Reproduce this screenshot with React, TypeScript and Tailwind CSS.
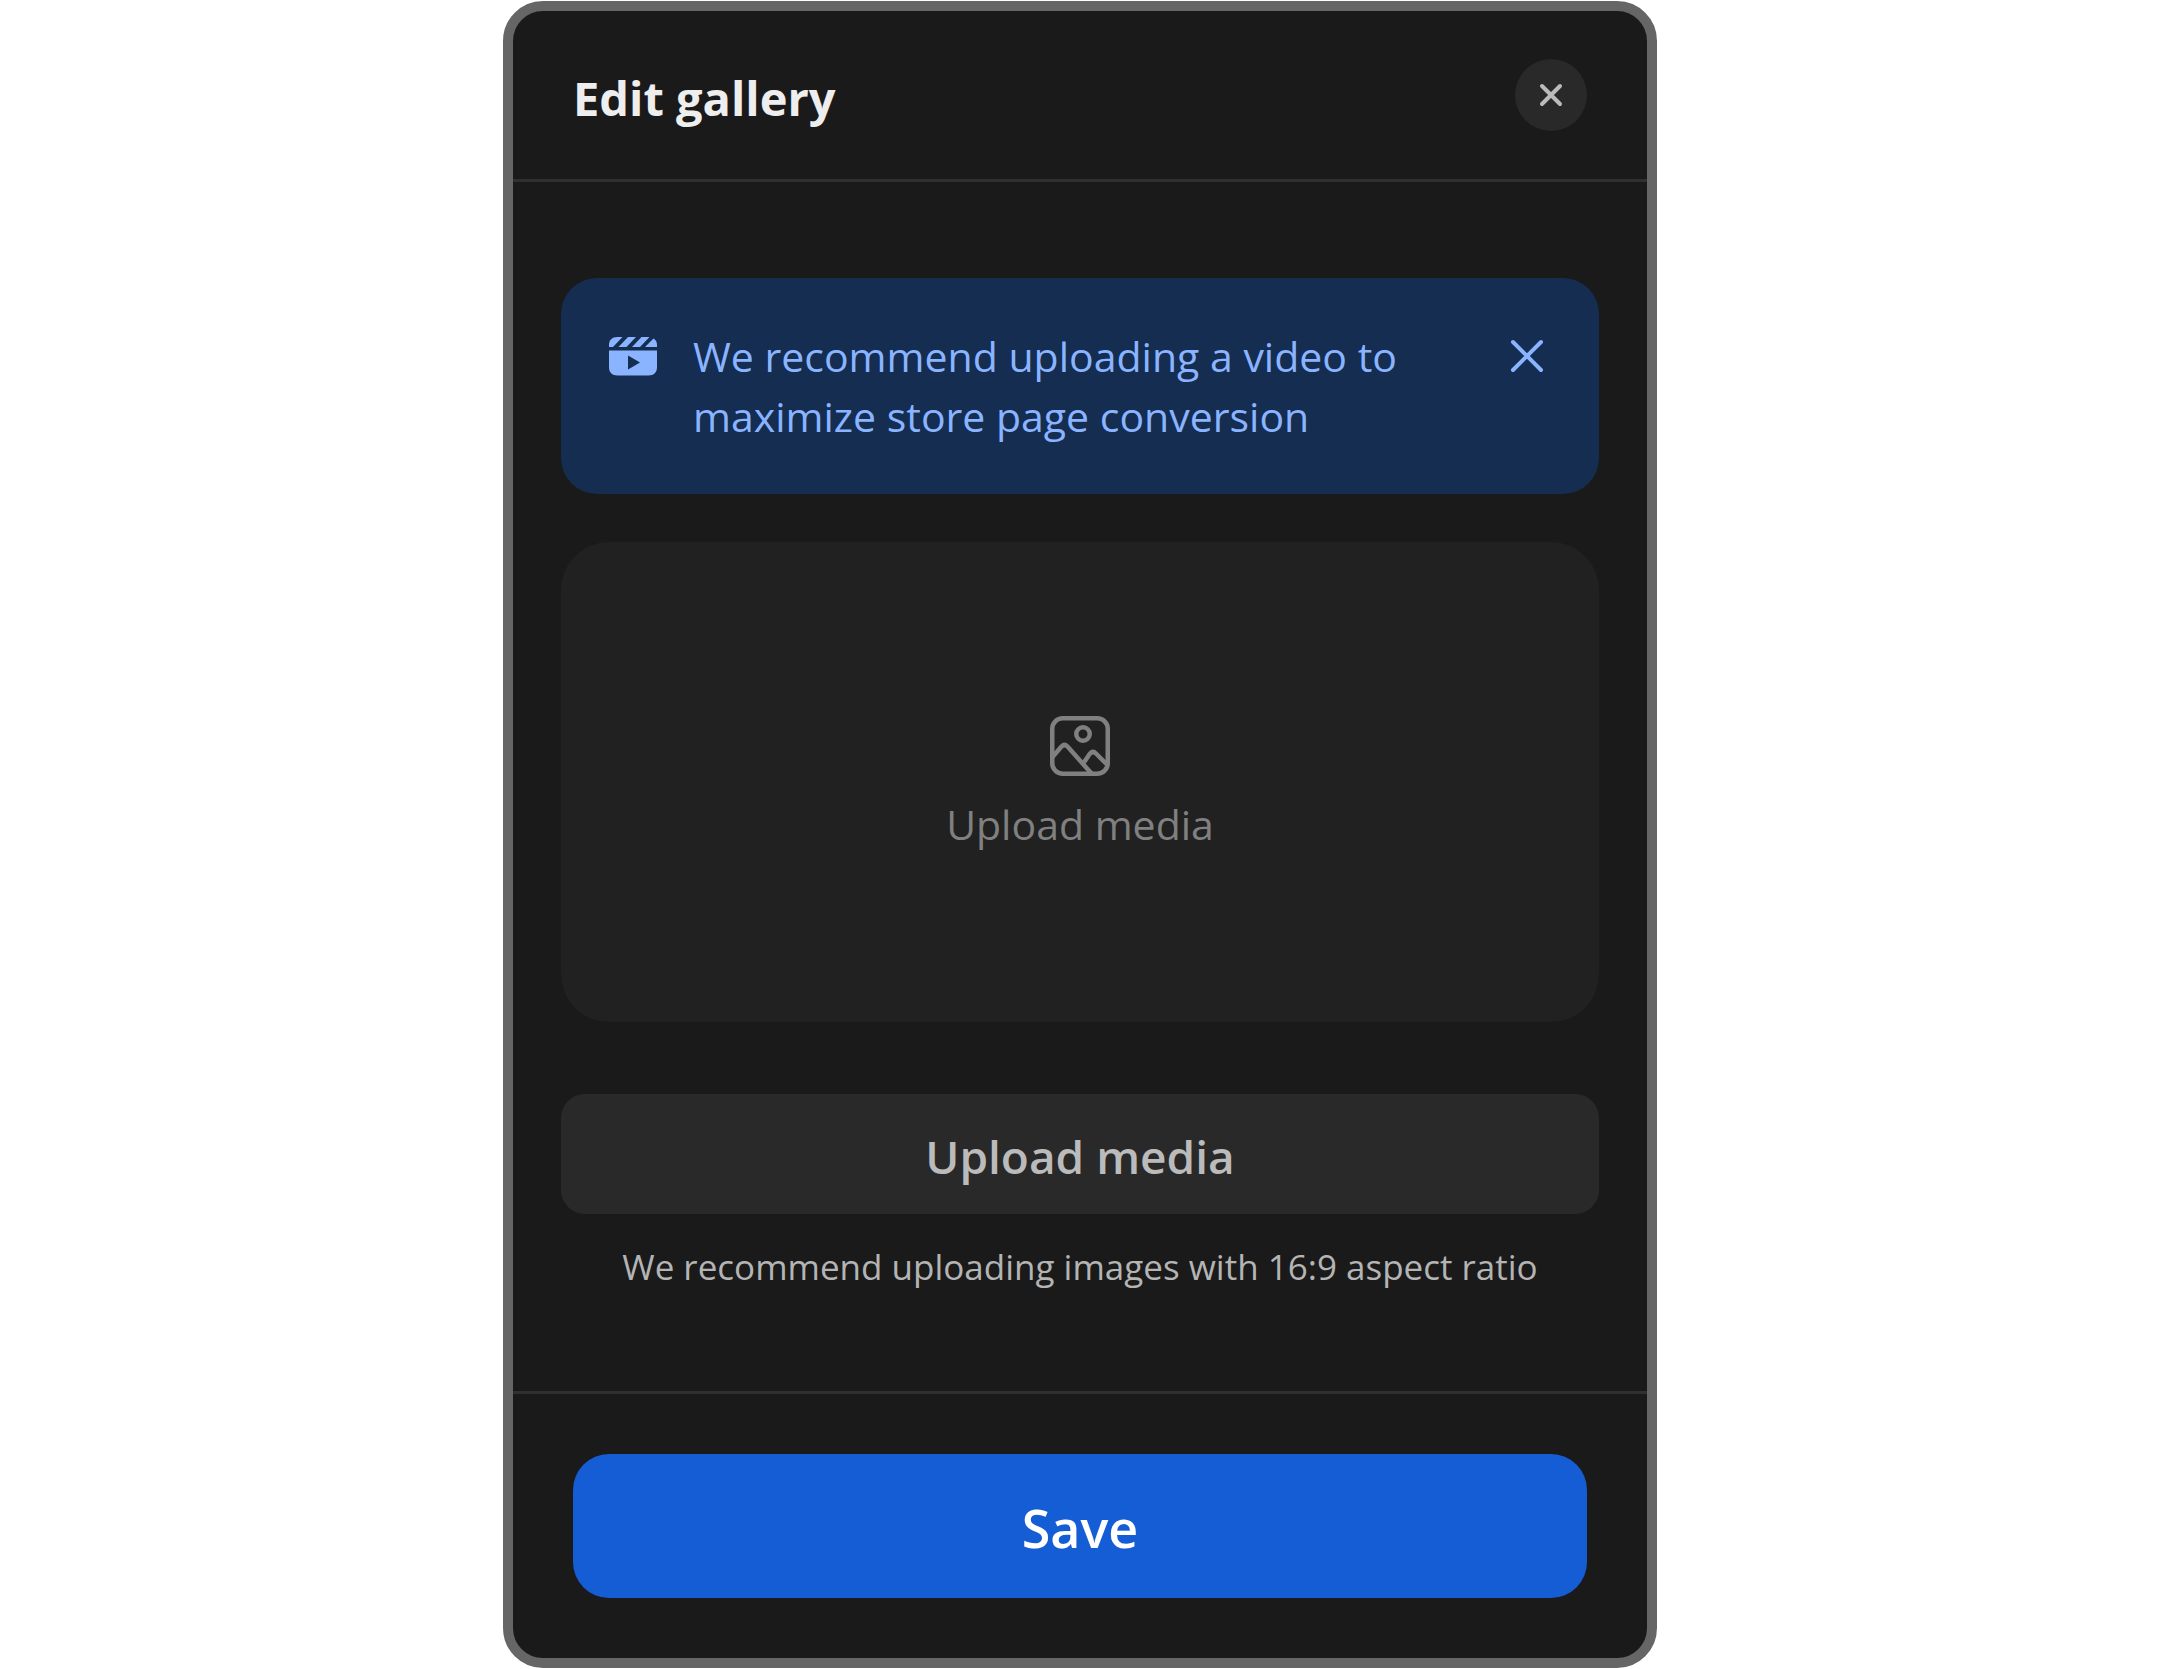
import React from 'react';

const CloseIcon: React.FC<{ inset: number }> = ({ inset }) => (
  <svg viewBox="0 0 48 48" className="h-12 w-12" fill="none" stroke="currentColor" strokeWidth="4" strokeLinecap="round" aria-hidden="true">
    <path d={`M${inset} ${inset}L${48 - inset} ${48 - inset}M${48 - inset} ${inset}L${inset} ${48 - inset}`} />
  </svg>
);

const ClapperIcon: React.FC = () => (
  <svg viewBox="0 0 48 48" className="h-12 w-12" fill="currentColor" aria-hidden="true">
    <path d="M8.5 5H13.5L4 15H0V13C0 8 3 5 8.5 5Z" />
    <path d="M19 5H27L17.5 15H9.5Z" />
    <path d="M32.5 5H40.5L31 15H23Z" />
    <path d="M44.5 6.5C47 8 48 10 48 13V15H36Z" />
    <path
      fillRule="evenodd"
      d="M0 18.5H48V35C48 40.5 45 43.5 39.5 43.5H8.5C3 43.5 0 40.5 0 35ZM19 23.5V37.5L31 30.5Z"
    />
  </svg>
);

const ImageIcon: React.FC = () => (
  <svg viewBox="0 0 72 72" className="h-18 w-18" fill="none" stroke="currentColor" strokeWidth="4.5" strokeLinejoin="round" aria-hidden="true">
    <rect x="8.25" y="8.25" width="55.5" height="55.5" rx="10.5" />
    <circle cx="39" cy="24" r="6.75" />
    <path d="M8.5 47L17.5 36.5Q20.5 33.5 23.5 36.5L47.5 63.5" />
    <path d="M39.5 53L46 43.5Q49 40.5 52 43.5L63.5 55" />
  </svg>
);

const App: React.FC = () => {
  return (
    <main className="flex justify-center bg-white px-4 py-px font-['Segoe_UI','Open_Sans','Noto_Sans',sans-serif]">
      <section
        role="dialog"
        aria-labelledby="gallery-title"
        className="w-full max-w-[1154px] overflow-hidden rounded-[40px] border-10 border-[#666666] bg-[#1a1a1a]"
      >
        {/* Header */}
        <header className="flex items-start justify-between border-b-3 border-[#303030] px-15 pt-12 pb-[42px]">
          <h1 id="gallery-title" className="text-[47px] leading-[78px] font-bold text-[#eeeeee]">
            Edit gallery
          </h1>
          <button
            type="button"
            aria-label="Close"
            className="flex h-18 w-18 items-center justify-center rounded-full bg-[#292929] text-[#bbbbbb]"
          >
            <CloseIcon inset={15} />
          </button>
        </header>

        {/* Body */}
        <div className="flex flex-col px-12 py-24">
          <div className="flex items-start gap-9 rounded-[36px] bg-[#142d50] p-12 text-[#8ab4ff]">
            <span className="flex h-15 items-center">
              <ClapperIcon />
            </span>
            <p className="max-w-[740px] flex-1 text-[41px] leading-[60px]">
              We recommend uploading a video to maximize store page conversion
            </p>
            <button type="button" aria-label="Dismiss" className="ml-auto flex h-15 items-center">
              <CloseIcon inset={10} />
            </button>
          </div>

          <div className="mt-12 flex h-[480px] flex-col items-center justify-center gap-3 rounded-[48px] bg-[#212121] text-[#808080]">
            <ImageIcon />
            <p className="text-[41px] leading-[60px]">Upload media</p>
          </div>

          <button
            type="button"
            className="mt-18 h-30 rounded-[24px] bg-[#292929] pt-1 text-[46px] leading-[72px] font-semibold text-[#bbbbbb]"
          >
            Upload media
          </button>
          <p className="mt-6 text-center text-[35px] leading-[57px] text-[#b4b4b4]">
            We recommend uploading images with 16:9 aspect ratio
          </p>
        </div>

        {/* Footer */}
        <footer className="border-t-3 border-[#303030] p-15">
          <button
            type="button"
            className="h-36 w-full rounded-[36px] bg-[#155dd4] pt-1 text-[52px] leading-[72px] font-semibold text-white"
          >
            Save
          </button>
        </footer>
      </section>
    </main>
  );
};

export default App;
